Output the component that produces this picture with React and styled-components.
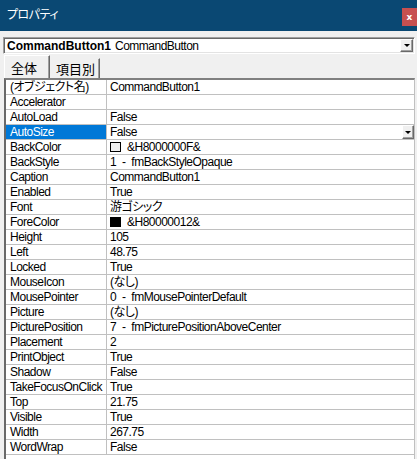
import React from 'react'
import styled, { createGlobalStyle } from 'styled-components'

const GlobalStyle = createGlobalStyle`
    html, body {
        margin: 0;
        padding: 0;
        background: #f0f0f0;
    }
    * {
        box-sizing: border-box;
    }
`

const FONT = `"Liberation Sans", "Noto Sans CJK JP", sans-serif`

const Window = styled.div`
    width: 417px;
    height: 459px;
    overflow: hidden;
    background: #f0f0f0;
    font-family: ${FONT};
    font-feature-settings: "palt";
    display: flex;
    flex-direction: column;
`

const TitleBar = styled.div`
    height: 31px;
    flex: none;
    background: #0a4873;
    display: flex;
    justify-content: space-between;
    align-items: flex-start;
`

const Title = styled.div`
    color: #ffffff;
    font-size: 12px;
    line-height: 31px;
    padding-left: 7px;
    letter-spacing: -0.5px;
`

const CloseButton = styled.div`
    margin-top: 8px;
    width: 15px;
    height: 18px;
    background: #c75050;
    color: #ffffff;
    font-family: "DejaVu Sans", sans-serif;
    font-weight: bold;
    font-size: 9px;
    display: flex;
    align-items: center;
    justify-content: center;
`

const Body = styled.div`
    flex: 1;
    display: flex;
    flex-direction: column;
    padding: 6px 2px 0 3px;
    min-height: 0;
`

const Combo = styled.div`
    height: 17px;
    flex: none;
    background: #ffffff;
    border: 1px solid;
    border-color: #a0a0a0 #ffffff #ffffff #a0a0a0;
    box-shadow: inset 1px 1px 0 #696969, inset -1px -1px 0 #e3e3e3;
    display: flex;
    align-items: center;
    padding: 0 1px 0 3px;
    white-space: nowrap;
`

const ComboName = styled.span`
    font-weight: bold;
    font-size: 12px;
    color: #000;
`

const ComboType = styled.span`
    font-size: 12px;
    letter-spacing: -0.5px;
    color: #000;
    margin-left: 4px;
    flex: 1;
`

const DropButton = styled.div`
    width: ${props => props.w}px;
    height: ${props => props.h}px;
    flex: none;
    background: #f0f0f0;
    border: 1px solid;
    border-color: #ffffff #696969 #696969 #ffffff;
    box-shadow: inset -1px -1px 0 #a0a0a0;
    display: flex;
    align-items: center;
    justify-content: center;
    &::after {
        content: '';
        border-left: 3px solid transparent;
        border-right: 3px solid transparent;
        border-top: 3px solid #000;
    }
`

const Tabs = styled.div`
    height: 24px;
    flex: none;
    display: flex;
    align-items: flex-end;
    padding-left: 1px;
`

const Tab = styled.div`
    height: ${props => (props.active ? 23 : 20)}px;
    padding: 0 ${props => (props.active ? 12 : 4)}px 0 ${props => (props.active ? 6 : 4)}px;
    font-size: 13px;
    color: #000;
    display: flex;
    align-items: center;
    border-left: 1px solid ${props => (props.active ? '#ffffff' : '#f0f0f0')};
    border-top: 1px solid ${props => (props.active ? '#ffffff' : '#f0f0f0')};
    border-right: 1px solid #696969;
    box-shadow: inset -1px 0 0 #a0a0a0;
    margin-right: 1px;
`

const Frame = styled.div`
    flex: 1;
    margin: 0 0 0 1px;
    background: #ffffff;
    border-top: 2px solid #808080;
    border-left: 2px solid #696969;
    border-right: 1px solid #c0c0c0;
    box-shadow: inset 1px 0 0 #ffffff;
    min-height: 0;
    overflow: hidden;
`

const Row = styled.div`
    display: flex;
    height: 15px;
    border-bottom: 1px solid #c0c0c0;
    font-size: 12px;
    letter-spacing: -0.5px;
    line-height: 14px;
    color: #000;
`

const NameCell = styled.div`
    width: 101px;
    flex: none;
    padding-left: 4px;
    border-right: 1px solid #c0c0c0;
    white-space: nowrap;
    overflow: hidden;
    background: ${props => (props.selected ? '#0078d7' : 'transparent')};
    color: ${props => (props.selected ? '#ffffff' : '#000000')};
`

const ValueCell = styled.div`
    flex: 1;
    padding-left: 3px;
    display: flex;
    align-items: center;
    white-space: nowrap;
    overflow: hidden;
    word-spacing: 3px;
`

const ValueText = styled.span`
    flex: 1;
`

const Swatch = styled.span`
    width: 11px;
    height: 10px;
    flex: none;
    border: 1px solid #000;
    background: ${props => props.color};
    margin-right: 6px;
`

const rows = [
    ['(オブジェクト名)', 'CommandButton1'],
    ['Accelerator', ''],
    ['AutoLoad', 'False'],
    ['AutoSize', 'False', { selected: true }],
    ['BackColor', '&H8000000F&', { swatch: '#f0f0f0' }],
    ['BackStyle', '1 - fmBackStyleOpaque'],
    ['Caption', 'CommandButton1'],
    ['Enabled', 'True'],
    ['Font', '游ゴシック'],
    ['ForeColor', '&H80000012&', { swatch: '#000000' }],
    ['Height', '105'],
    ['Left', '48.75'],
    ['Locked', 'True'],
    ['MouseIcon', '(なし)'],
    ['MousePointer', '0 - fmMousePointerDefault'],
    ['Picture', '(なし)'],
    ['PicturePosition', '7 - fmPicturePositionAboveCenter'],
    ['Placement', '2'],
    ['PrintObject', 'True'],
    ['Shadow', 'False'],
    ['TakeFocusOnClick', 'True'],
    ['Top', '21.75'],
    ['Visible', 'True'],
    ['Width', '267.75'],
    ['WordWrap', 'False'],
]

const App = () => {
    return (
        <Window>
            <GlobalStyle />
            <TitleBar>
                <Title>プロパティ</Title>
                <CloseButton>x</CloseButton>
            </TitleBar>
            <Body>
                <Combo>
                    <ComboName>CommandButton1</ComboName>
                    <ComboType>CommandButton</ComboType>
                    <DropButton w={13} h={13} />
                </Combo>
                <Tabs>
                    <Tab active>全体</Tab>
                    <Tab>項目別</Tab>
                </Tabs>
                <Frame>
                    {rows.map(([name, value, opts = {}]) => (
                        <Row key={name}>
                            <NameCell selected={opts.selected}>{name}</NameCell>
                            <ValueCell>
                                {opts.swatch && <Swatch color={opts.swatch} />}
                                <ValueText>{value}</ValueText>
                                {opts.selected && <DropButton w={12} h={14} />}
                            </ValueCell>
                        </Row>
                    ))}
                </Frame>
            </Body>
        </Window>
    )
}

export default App
